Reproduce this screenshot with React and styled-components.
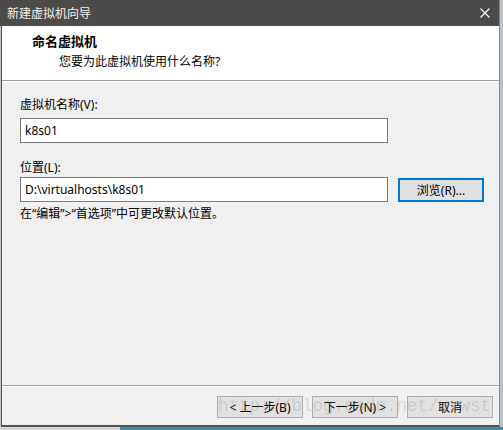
import React from "react";
import styled, { createGlobalStyle } from "styled-components";

const GlobalStyle = createGlobalStyle`
  html, body {
    margin: 0;
    padding: 0;
    width: 503px;
    height: 430px;
    overflow: hidden;
    background: #b9c2c8;
  }
  body {
    font-family: "Noto Sans", "Noto Sans CJK SC", sans-serif;
    font-size: 12px;
    color: #000;
  }
`;

const Screen = styled.div`
  display: flex;
  flex-direction: column;
  width: 503px;
  height: 430px;
`;

const Window = styled.div`
  // flexbox
  display: flex;
  flex-direction: column;

  // box model
  width: 499px;
  height: 427px;
  box-sizing: border-box;
  border-left: 1px solid #555;
  border-right: 1px solid #8a8a8a;
  border-bottom: 2px solid #555;
  margin-left: 1px;
`;

const Desktop = styled.div`
  display: flex;
  flex: 1;
`;

const Shadow = styled.div`
  width: 120px;
  background: #d6d6d6;
`;

const Teal = styled.div`
  flex: 1;
  background: #3c8ea6;
`;

const TitleBar = styled.div`
  // flexbox
  display: flex;
  align-items: center;
  justify-content: space-between;

  // box model
  height: 26px;
  margin-left: -2px;
  padding: 0 9px 0 7px;
  background: #4c4b49;

  // typography
  color: #f2f2f2;
  font-size: 12px;
`;

const Close = styled.svg`
  width: 10px;
  height: 10px;
  display: block;
`;

const Header = styled.div`
  // flexbox
  display: flex;
  flex-direction: column;
  gap: 5px;

  // box model
  height: 55px;
  box-sizing: border-box;
  padding: 7px 0 0 30px;
  background: #fff;
  border-bottom: 1px solid #a0a0a0;
`;

const Heading = styled.div`
  font-weight: bold;
  font-size: 13px;
  line-height: 16px;
`;

const Subtitle = styled.div`
  padding-left: 27px;
  line-height: 16px;
`;

const Body = styled.div`
  // flexbox
  display: flex;
  flex-direction: column;

  // box model
  flex: 1;
  padding: 15px 0 0 18px;
  background: #f0f0f0;
  border-top: 1px solid #fff;
  border-bottom: 1px solid #a0a0a0;
`;

const Label = styled.div`
  line-height: 16px;
  margin-bottom: ${(p) => p.$gap}px;
`;

const Row = styled.div`
  display: flex;
  align-items: center;
  gap: 10px;
`;

const Field = styled.div`
  // flexbox
  display: flex;
  align-items: center;

  // box model
  width: 368px;
  height: 25px;
  box-sizing: border-box;
  padding-left: 4px;
  border: 1px solid #7a7a7a;
  background: #fff;
  margin-bottom: ${(p) => p.$gap}px;
`;

const Hint = styled.div`
  line-height: 16px;
  margin-top: 4px;
`;

const Button = styled.div`
  // flexbox
  display: flex;
  align-items: center;
  justify-content: center;

  // box model
  width: 86px;
  height: ${(p) => (p.$focused ? 24 : 22)}px;
  box-sizing: border-box;
  border: ${(p) => (p.$focused ? "2px solid #0078d7" : "1px solid #adadad")};
  background: #e1e1e1;
`;

const Footer = styled.div`
  // flexbox
  display: flex;
  justify-content: flex-end;
  gap: 9px;

  // box model
  height: 39px;
  box-sizing: border-box;
  padding: 9px 6px 0 0;
  background: #f0f0f0;
  border-top: 1px solid #fff;
  position: relative;
`;

// csdn watermark lying over the buttons
const Watermark = styled.div`
  position: absolute;
  left: 216px;
  top: 7px;
  font-family: "Liberation Mono", "DejaVu Sans Mono", monospace;
  font-size: 17.5px;
  line-height: 24px;
  color: rgba(150, 150, 150, 0.3);
  pointer-events: none;
  white-space: nowrap;
`;

export default function App() {
  return (
    <>
      <GlobalStyle />
      <Screen>
        <Window>
          <TitleBar>
            <span>新建虚拟机向导</span>
            <Close viewBox="0 0 10 10">
              <path d="M0.5 0.5 L9.5 9.5 M9.5 0.5 L0.5 9.5" stroke="#fff" strokeWidth="1.1" />
            </Close>
          </TitleBar>
          <Header>
            <Heading>命名虚拟机</Heading>
            <Subtitle>您要为此虚拟机使用什么名称?</Subtitle>
          </Header>
          <Body>
            <Label $gap={5}>虚拟机名称(V):</Label>
            <Field $gap={17}>k8s01</Field>
            <Label $gap={1}>位置(L):</Label>
            <Row>
              <Field $gap={0}>D:\virtualhosts\k8s01</Field>
              <Button $focused>浏览(R)...</Button>
            </Row>
            <Hint>在“编辑”&gt;“首选项”中可更改默认位置。</Hint>
          </Body>
          <Footer>
            <Button>&lt; 上一步(B)</Button>
            <Button>下一步(N) &gt;</Button>
            <Button>取消</Button>
            <Watermark>http://blog.csdn.net/wxwst</Watermark>
          </Footer>
        </Window>
        <Desktop>
          <Shadow />
          <Teal />
        </Desktop>
      </Screen>
    </>
  );
}
